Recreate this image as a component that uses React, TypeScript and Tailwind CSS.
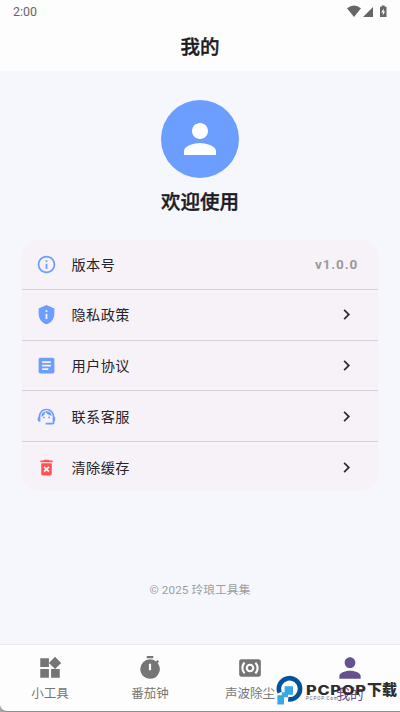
import React from 'react';
import {
  MdArticle,
  MdChevronRight,
  MdDeleteForever,
  MdInfoOutline,
  MdPerson,
  MdPrivacyTip,
  MdSupportAgent,
  MdSurroundSound,
  MdTimer,
  MdWidgets,
} from 'react-icons/md';

const menuItems = [
  { label: '版本号', icon: MdInfoOutline, color: 'text-[#6c9eff]', value: 'v1.0.0' },
  { label: '隐私政策', icon: MdPrivacyTip, color: 'text-[#6c9eff]' },
  { label: '用户协议', icon: MdArticle, color: 'text-[#6c9eff]' },
  { label: '联系客服', icon: MdSupportAgent, color: 'text-[#6c9eff]' },
  { label: '清除缓存', icon: MdDeleteForever, color: 'text-[#ff5252]' },
];

const tabs = [
  { label: '小工具', icon: MdWidgets },
  { label: '番茄钟', icon: MdTimer },
  { label: '声波除尘', icon: MdSurroundSound },
  { label: '我的', icon: MdPerson, active: true },
];

const StatusBar: React.FC = () => (
  <div className="flex h-[23px] items-center justify-between pl-[13px] pr-[12px] text-[#666]">
    <span className="pt-px text-[12.4px] leading-none">2:00</span>
    <svg className="mb-[2px] h-[14px] w-[42px]" viewBox="0 0 42 14" fill="currentColor">
      <path d="M1 4.2Q8 -1 15 4.2L8 13Z" />
      <path d="M17 13L27 3V13Z" />
      <path d="M34 2.8h1.7V1.4h3v1.4h1.8V13H34Z" />
      <path d="M37.7 4.4L35.2 8.4h1.6v2.9L39.2 7.4h-1.5Z" fill="#fdfdfd" />
    </svg>
  </div>
);

const Menu: React.FC = () => (
  <div className="mx-[22px] mt-[23px] h-[251px] rounded-[18px] bg-[#f7f1f8]">
    {menuItems.map(({ label, icon: Icon, color, value }, i) => (
      <div
        key={label}
        className={`flex items-center pl-[14px] ${i === 0 ? 'h-[50px]' : 'h-[50.7px]'} ${i < menuItems.length - 1 ? 'border-b border-[#d8cfda]' : ''}`}
      >
        <Icon className={`size-[21px] ${color}`} />
        <span className="ml-[14.5px] flex-1 pt-[2px] text-[14.2px] tracking-[0.4px] text-[#252328]">{label}</span>
        {value ? (
          <span className="mr-[20px] text-[13.5px] font-bold tracking-[0.85px] text-[#9b999d]">{value}</span>
        ) : (
          <MdChevronRight className="mr-[21px] size-[21px] text-[#2c2930]" />
        )}
      </div>
    ))}
  </div>
);

const Watermark: React.FC = () => (
  <div className="absolute left-[276px] top-[675px] flex">
    <svg className="h-[31px] w-[29px]" viewBox="0 0 29 31">
      <path d="M3.6 17.6A10.6 10.6 0 1 1 12.2 24.3" fill="none" stroke="#06529a" strokeWidth="4.6" />
      <path d="M8.6 11.2h8.4v8.6h-5v2.4H8v7.4H1.4v-9.4h4.4v-3h2.8z" fill="#39a7e6" />
    </svg>
    <div className="relative h-[31px] w-[94px] text-[#2e2e31]">
      <span className="absolute left-[1px] top-[7px] origin-left scale-x-[1.26] font-[Inter] text-[13px] font-extrabold leading-[17px] tracking-[0.6px]">
        PCPOP
      </span>
      <span className="absolute left-[62px] top-[7px] text-[15px] font-black leading-[17px]">下载</span>
      <span className="absolute left-[1px] top-[21px] text-[4.5px] leading-[6px] tracking-[0.9px] text-[#55555a]">
        PCPOP.Com
      </span>
    </div>
  </div>
);

const TabBar: React.FC = () => (
  <nav className="grid h-[68px] grid-cols-4 rounded-bl-[7px] border-b border-t border-b-[#8d8d8d] border-t-[#ecedf2] bg-[#fdfdfd]">
    {tabs.map(({ label, icon: Icon, active }) => (
      <div
        key={label}
        className={`flex flex-col items-center pt-[7px] ${active ? 'text-[#66518f]' : 'text-[#757575]'}`}
      >
        <div className="mb-px flex h-[32px] items-center">
          <Icon className={active ? 'size-[32px]' : 'size-[26px]'} />
        </div>
        <span className={`leading-[18px] ${active ? 'text-[13.6px]' : 'text-[12.5px]'}`}>{label}</span>
      </div>
    ))}
  </nav>
);

export default function App() {
  return (
    <div className="relative flex h-[712px] w-[400px] flex-col overflow-hidden bg-[#f5f7fc] font-[Roboto,'Noto_Sans_CJK_SC',sans-serif]">
      <header className="h-[71px] bg-[#fdfdfd]">
        <StatusBar />
        <h1 className="text-center text-[19.5px] font-medium leading-[50px] text-[#1c1b1f] [-webkit-text-stroke:0.4px_#1c1b1f]">
          我的
        </h1>
      </header>
      <main className="flex-1">
        <div className="flex flex-col items-center pt-[29px]">
          <div className="flex size-[78px] items-center justify-center rounded-full bg-[#6c9eff]">
            <MdPerson className="size-[48px] text-white" />
          </div>
          <h2 className="mt-[11px] text-[19.5px] font-medium leading-[28px] text-[#1c1b1f] [-webkit-text-stroke:0.4px_#1c1b1f]">
            欢迎使用
          </h2>
        </div>
        <Menu />
        <p className="mt-[90px] text-center text-[11.7px] leading-[18px] tracking-[0.1px] text-[#9e9e9e]">© 2025 玲琅工具集</p>
      </main>
      <div className="bg-[#a8a8a8]">
        <TabBar />
      </div>
      <Watermark />
    </div>
  );
}
